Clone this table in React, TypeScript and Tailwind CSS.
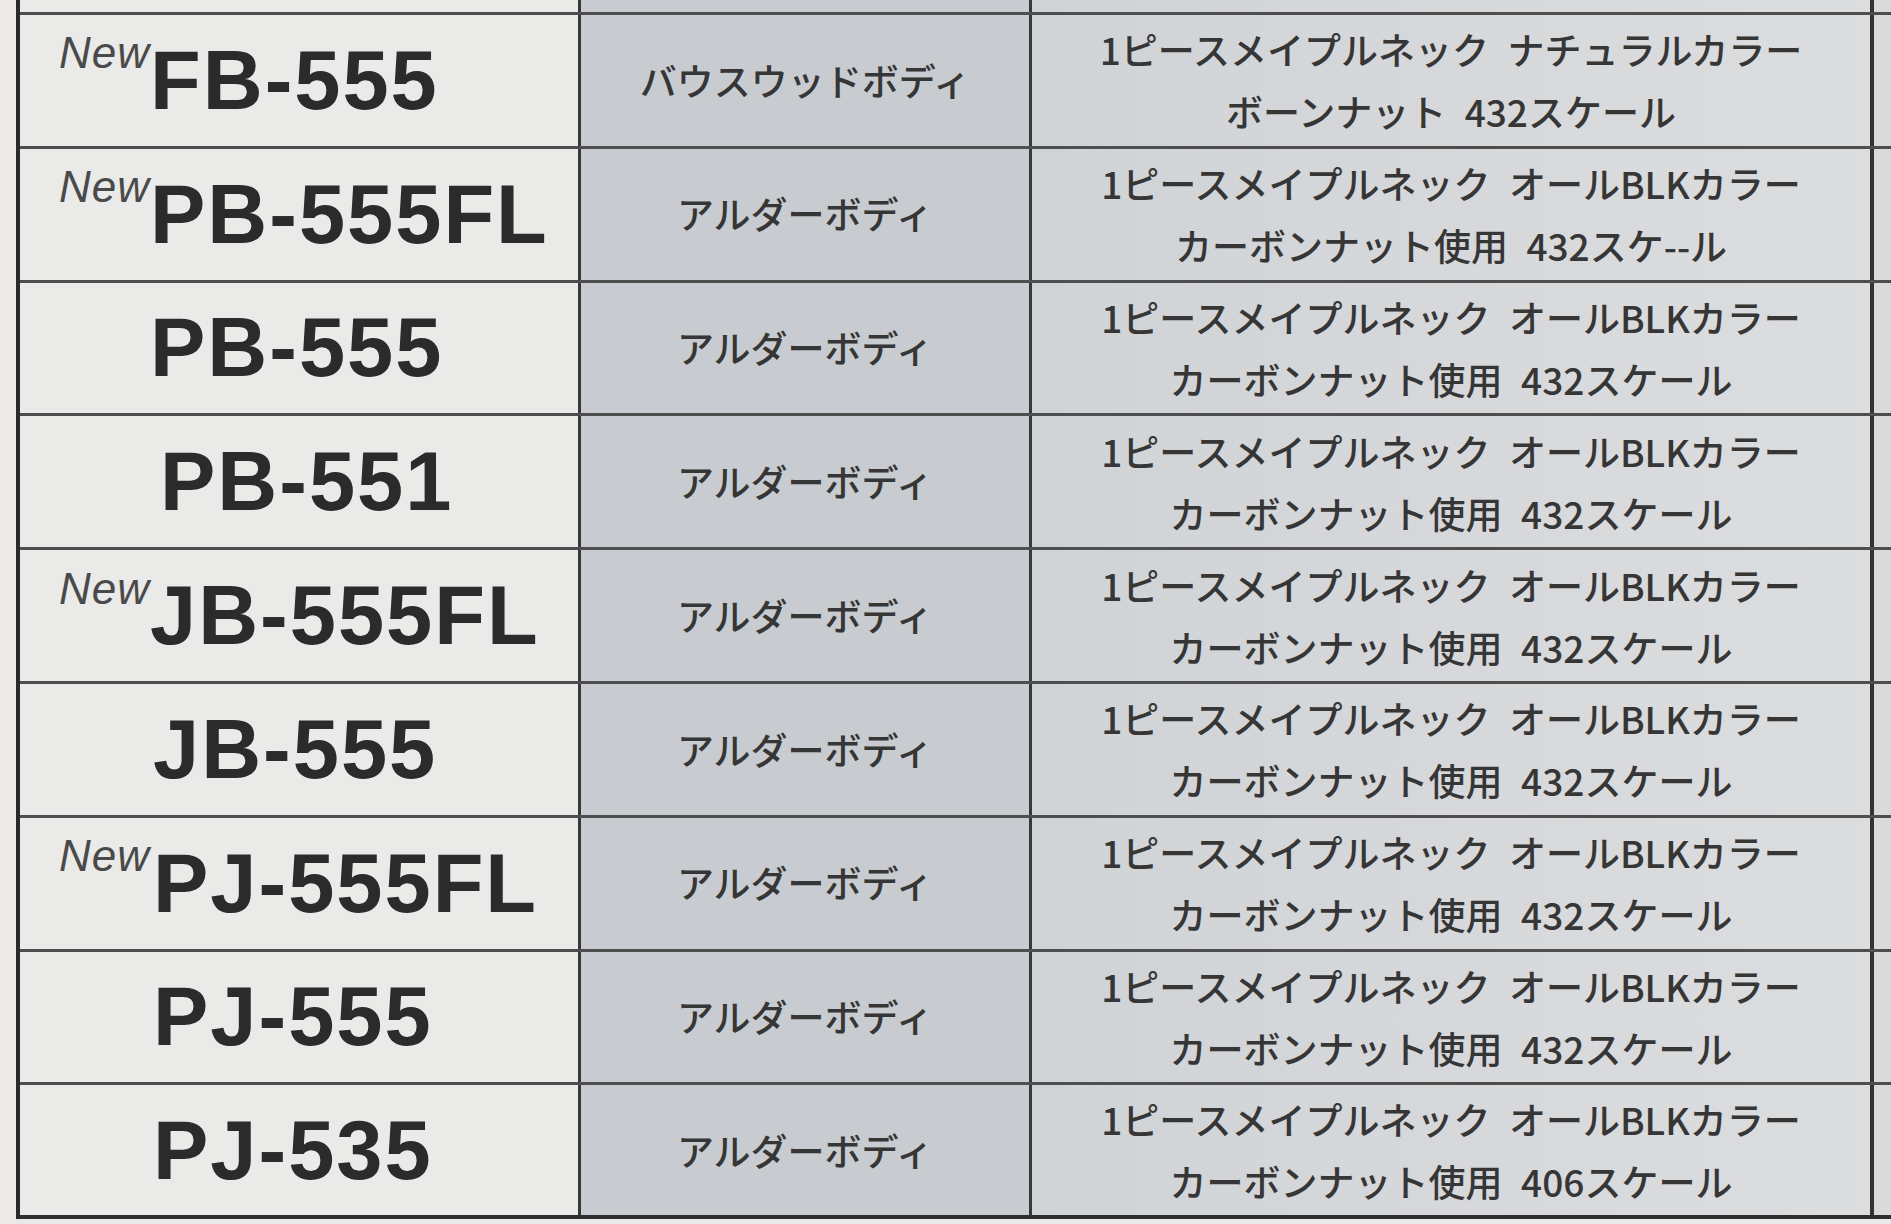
import React from "react";

// Scanned spec sheet: model / body wood / neck + nut + scale.
type Row = {
  model: string;
  isNew?: boolean;
  indent?: string;
  body: string;
  spec1: string;
  spec2: string;
};

const EN = "\u2002";

const rows: Row[] = [
  { model: "FB-555", isNew: true, body: "バウスウッドボディ", spec1: `1ピースメイプルネック${EN}ナチュラルカラー`, spec2: `ボーンナット${EN}432スケール` },
  { model: "PB-555FL", isNew: true, body: "アルダーボディ", spec1: `1ピースメイプルネック${EN}オールBLKカラー`, spec2: `カーボンナット使用${EN}432スケ--ル` },
  { model: "PB-555", body: "アルダーボディ", spec1: `1ピースメイプルネック${EN}オールBLKカラー`, spec2: `カーボンナット使用${EN}432スケール` },
  { model: "PB-551", indent: "pl-[10px]", body: "アルダーボディ", spec1: `1ピースメイプルネック${EN}オールBLKカラー`, spec2: `カーボンナット使用${EN}432スケール` },
  { model: "JB-555FL", isNew: true, body: "アルダーボディ", spec1: `1ピースメイプルネック${EN}オールBLKカラー`, spec2: `カーボンナット使用${EN}432スケール` },
  { model: "JB-555", indent: "pl-[3px]", body: "アルダーボディ", spec1: `1ピースメイプルネック${EN}オールBLKカラー`, spec2: `カーボンナット使用${EN}432スケール` },
  { model: "PJ-555FL", isNew: true, indent: "pl-[3px]", body: "アルダーボディ", spec1: `1ピースメイプルネック${EN}オールBLKカラー`, spec2: `カーボンナット使用${EN}432スケール` },
  { model: "PJ-555", indent: "pl-[3px]", body: "アルダーボディ", spec1: `1ピースメイプルネック${EN}オールBLKカラー`, spec2: `カーボンナット使用${EN}432スケール` },
  { model: "PJ-535", indent: "pl-[3px]", body: "アルダーボディ", spec1: `1ピースメイプルネック${EN}オールBLKカラー`, spec2: `カーボンナット使用${EN}406スケール` },
];

const jp = "font-['Noto_Sans_CJK_JP','Noto_Sans',sans-serif]";

const SpecRow = ({ row, last }: { row: Row; last: boolean }) => (
  <div
    className={`flex h-[133.8px] ${
      last ? "border-b-[4px] border-[#2e2e2e]" : "border-b-[3px] border-[#4e4e4e]"
    }`}
  >
    {/* model */}
    <div className="w-[561px] shrink-0 flex items-center bg-[#eaeae8] border-r-[3px] border-[#383838]">
      <div className="w-[130px] shrink-0 flex justify-end">
        {row.isNew && (
          <span className="relative -top-[27px] text-[44px] leading-none italic tracking-[1px] text-[#4a4a4a] font-['Liberation_Sans',Arial,sans-serif]">
            New
          </span>
        )}
      </div>
      <span
        className={`${row.indent ?? ""} text-[83px] leading-none font-bold tracking-[2px] text-[#2b2b2b] font-['Liberation_Sans',Arial,sans-serif]`}
      >
        {row.model}
      </span>
    </div>

    {/* body */}
    <div
      className={`w-[451px] shrink-0 flex items-center justify-center bg-[#c8ccd0] border-r-[3px] border-[#383838] text-[37px] font-medium text-[#363636] ${jp}`}
    >
      {row.body}
    </div>

    {/* neck / nut / scale */}
    <div
      className={`w-[842px] shrink-0 flex flex-col items-center justify-center bg-linear-to-r from-[#d0d3d6] to-[#dcdddf] border-r-[4px] border-[#333333] text-[37px] leading-[62px] font-medium text-[#363636] whitespace-pre ${jp}`}
    >
      <div>{row.spec1}</div>
      <div>{row.spec2}</div>
    </div>

    <div className="flex-1 bg-[#d9dadc]" />
  </div>
);

export default function App() {
  return (
    <div className="w-[1891px] h-[1224px] overflow-hidden bg-[#e9e9e7] flex">
      <div className="w-[16px] shrink-0 bg-[#ebeae8]" />
      <div className="flex-1 flex flex-col">
        <div className="border-l-[4px] border-[#2a2a2a] flex flex-col">
          {/* tail of the row above the crop */}
          <div className="flex h-[15px] border-b-[3px] border-[#4e4e4e]">
            <div className="w-[561px] shrink-0 bg-[#eaeae8] border-r-[3px] border-[#383838]" />
            <div className="w-[451px] shrink-0 bg-[#c8ccd0] border-r-[3px] border-[#383838]" />
            <div className="w-[842px] shrink-0 bg-linear-to-r from-[#d0d3d6] to-[#dcdddf] border-r-[4px] border-[#333333]" />
            <div className="flex-1 bg-[#d9dadc]" />
          </div>
          {rows.map((r, i) => (
            <SpecRow key={r.model} row={r} last={i === rows.length - 1} />
          ))}
        </div>
      </div>
    </div>
  );
}
